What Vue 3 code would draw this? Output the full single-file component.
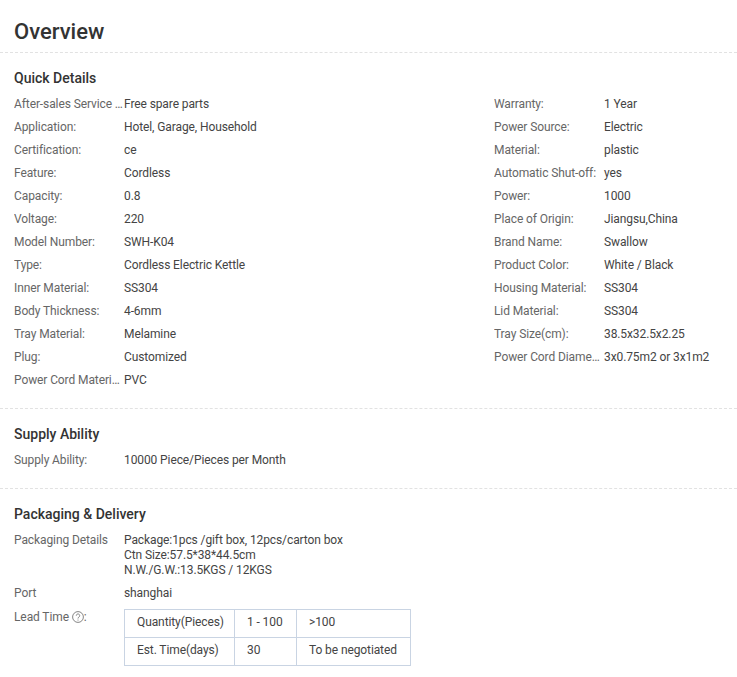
<script setup>
const left = [
  ['After-sales Service Provided:', 'Free spare parts'],
  ['Application:', 'Hotel, Garage, Household'],
  ['Certification:', 'ce'],
  ['Feature:', 'Cordless'],
  ['Capacity:', '0.8'],
  ['Voltage:', '220'],
  ['Model Number:', 'SWH-K04'],
  ['Type:', 'Cordless Electric Kettle'],
  ['Inner Material:', 'SS304'],
  ['Body Thickness:', '4-6mm'],
  ['Tray Material:', 'Melamine'],
  ['Plug:', 'Customized'],
  ['Power Cord Material:', 'PVC'],
]
const right = [
  ['Warranty:', '1 Year'],
  ['Power Source:', 'Electric'],
  ['Material:', 'plastic'],
  ['Automatic Shut-off:', 'yes'],
  ['Power:', '1000'],
  ['Place of Origin:', 'Jiangsu,China'],
  ['Brand Name:', 'Swallow'],
  ['Product Color:', 'White / Black'],
  ['Housing Material:', 'SS304'],
  ['Lid Material:', 'SS304'],
  ['Tray Size(cm):', '38.5x32.5x2.25'],
  ['Power Cord Diameter:', '3x0.75m2 or 3x1m2'],
]
</script>

<template>
  <div class="page">
    <h1 class="title">Overview</h1>

    <section class="section quick">
      <h2 class="heading">Quick Details</h2>
      <div class="columns">
        <div class="col" v-for="(col, i) in [left, right]" :key="i">
          <div class="row" v-for="r in col" :key="r[0]">
            <div class="label">{{ r[0] }}</div>
            <div class="value">{{ r[1] }}</div>
          </div>
        </div>
      </div>
    </section>

    <section class="section supply">
      <h2 class="heading">Supply Ability</h2>
      <div class="row">
        <div class="label">Supply Ability:</div>
        <div class="value">10000 Piece/Pieces per Month</div>
      </div>
    </section>

    <section class="section packaging">
      <h2 class="heading">Packaging &amp; Delivery</h2>
      <div class="row">
        <div class="label">Packaging Details</div>
        <div class="value">Package:1pcs /gift box, 12pcs/carton box<br />Ctn Size:57.5*38*44.5cm<br />N.W./G.W.:13.5KGS / 12KGS</div>
      </div>
      <div class="row">
        <div class="label">Port</div>
        <div class="value">shanghai</div>
      </div>
      <div class="row lead">
        <div class="label lead-label">Lead Time
          <svg class="help" width="12" height="12" viewBox="0 0 12 12">
            <circle cx="6" cy="6" r="5.4" fill="none" stroke="#777" stroke-width="0.9" />
            <path d="M4.3 4.7a1.7 1.7 0 1 1 2.7 1.3c-.7.5-1 .8-1 1.5" fill="none" stroke="#777" stroke-width="0.9" />
            <circle cx="6" cy="9" r="0.6" fill="#777" />
          </svg>:</div>
        <table class="lead-table">
          <tbody>
            <tr><td class="c1">Quantity(Pieces)</td><td class="c2">1 - 100</td><td class="c3">&gt;100</td></tr>
            <tr><td class="c1">Est. Time(days)</td><td class="c2">30</td><td class="c3">To be negotiated</td></tr>
          </tbody>
        </table>
      </div>
    </section>
  </div>
</template>

<style scoped>
.page {
  width: 737px;
  height: 677px;
  overflow: hidden;
  box-sizing: border-box;
  padding-top: 18px;
  background: #fff;
  font-family: Roboto, "Liberation Sans", sans-serif;
  font-size: 12px;
  letter-spacing: -0.1px;
  color: #333;
}
.title {
  margin: 0;
  padding: 0 0 6px 14px;
  font-size: 22px;
  line-height: 28px;
  font-weight: 500;
  letter-spacing: 0;
  color: #333;
  border-bottom: 1px dashed #e2e2e2;
}
.section {
  padding-left: 14px;
  padding-top: 16px;
}
.quick,
.supply {
  padding-bottom: 15px;
  border-bottom: 1px dashed #e2e2e2;
}
.heading {
  margin: 0 0 7px;
  font-size: 14px;
  line-height: 18px;
  font-weight: 500;
  letter-spacing: 0;
  color: #333;
}
.columns {
  display: flex;
}
.col {
  width: 480px;
}
.col + .col {
  width: 243px;
}
.row {
  display: flex;
  padding: 3px 0 5px;
  line-height: 15px;
}
.label {
  flex: none;
  box-sizing: border-box;
  width: 110px;
  padding-right: 1px;
  color: #666;
  white-space: nowrap;
  overflow: hidden;
  text-overflow: ellipsis;
}
.value {
  color: #444;
}
.lead-label {
  overflow: visible;
  padding-top: 1px;
}
.help {
  vertical-align: -2px;
}
.lead-table {
  border-collapse: collapse;
  table-layout: fixed;
  width: 286px;
}
.lead-table td {
  border: 1px solid #c9d4e3;
  height: 28px;
  padding: 0 0 2px 12px;
  color: #444;
  box-sizing: border-box;
}
.c1 { width: 110px; }
.c2 { width: 62px; }
.c3 { width: 114px; }
</style>
